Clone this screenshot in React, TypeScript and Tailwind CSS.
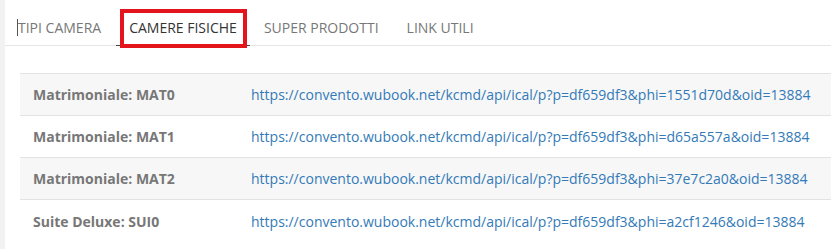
const tabs = ['TIPI CAMERA', 'CAMERE FISICHE', 'SUPER PRODOTTI', 'LINK UTILI']

const rows = [
  { label: 'Matrimoniale: MAT0', phi: '1551d70d' },
  { label: 'Matrimoniale: MAT1', phi: 'd65a557a' },
  { label: 'Matrimoniale: MAT2', phi: '37e7c2a0' },
  { label: 'Suite Deluxe: SUI0', phi: 'a2cf1246' },
]

export default function App() {
  return (
    <div className="flex h-[249px] w-[831px] overflow-hidden bg-white font-['Open_Sans',sans-serif] text-[14px]">
      {/* left gutter */}
      <div className="w-[5px] shrink-0 bg-[#f2f2f2]" />

      <div className="flex-1">
        {/* tabs */}
        <div className="flex h-[46px] border-b border-[#e6e6e6] pt-[9px]">
          {tabs.map((t, i) => (
            <div
              key={t}
              className={
                i === 1
                  ? 'relative -mb-px flex items-center border-b border-[#444] pl-[13px] pr-[13px] text-[#333]'
                  : i === 0
                    ? 'relative flex items-center pl-[13px] pr-[15px] text-[#777]'
                    : 'relative flex items-center px-[14px] text-[#777]'
              }
            >
              {i === 0 && <span className="absolute left-[12px] top-[10px] h-[17px] w-px bg-[#555]" />}
              <span className="leading-[37px]">{t}</span>
              {i === 1 && (
                <span className="pointer-events-none absolute left-[4px] right-[3px] top-0 bottom-[-3px] border-4 border-[#e3141b]" />
              )}
            </div>
          ))}
        </div>

        {/* table */}
        <div className="mt-[27px] ml-[15px] border-t border-[#e3e3e3]">
          {rows.map((r, i) => (
            <div
              key={r.label}
              className={`flex h-[42px] items-center border-b border-[#e3e3e3] ${i % 2 === 0 ? 'bg-[#f7f7f7]' : 'bg-white'} ${i === rows.length - 1 ? 'border-b-0' : ''}`}
            >
              <div className="w-[231px] shrink-0 pl-[13px] font-bold text-[#777]">{r.label}</div>
              <a className="whitespace-nowrap text-[#337ab7]">
                {`https://convento.wubook.net/kcmd/api/ical/p?p=df659df3&phi=${r.phi}&oid=13884`}
              </a>
            </div>
          ))}
        </div>
      </div>
    </div>
  )
}
